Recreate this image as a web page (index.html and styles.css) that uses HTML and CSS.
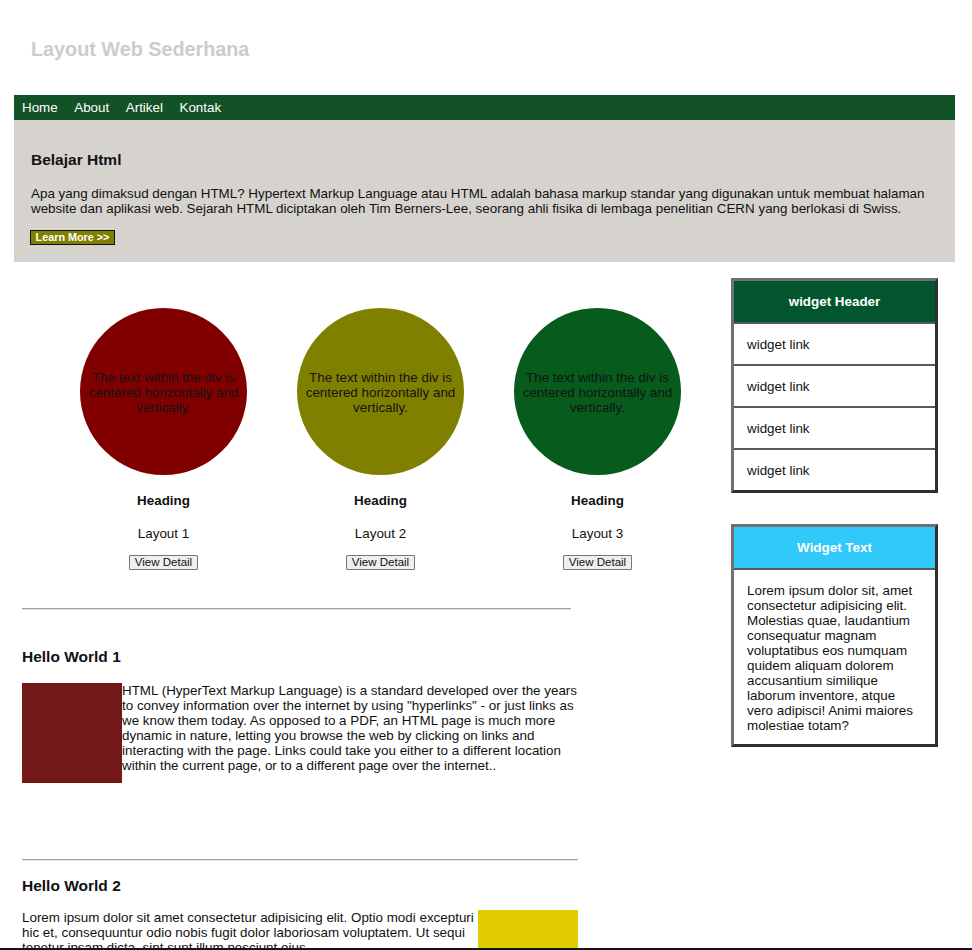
FILE: index.html
```html
<!DOCTYPE html>
<html lang="id">
<head>
<meta charset="utf-8">
<title>Layout Web Sederhana</title>
<link rel="stylesheet" href="styles.css">
</head>
<body>
<header class="site-header">
  <h1 class="site-title">Layout Web Sederhana</h1>
</header>
<nav class="nav">
  <a href="#">Home</a>
  <a href="#">About</a>
  <a href="#">Artikel</a>
  <a href="#">Kontak</a>
</nav>
<section class="jumbotron">
  <h2>Belajar Html</h2>
  <p>Apa yang dimaksud dengan HTML? Hypertext Markup Language atau HTML adalah bahasa markup standar yang digunakan untuk membuat halaman website dan aplikasi web. Sejarah HTML diciptakan oleh Tim Berners-Lee, seorang ahli fisika di lembaga penelitian CERN yang berlokasi di Swiss.</p>
  <button class="learn-btn">Learn More &gt;&gt;</button>
</section>
<div class="main">
  <main class="content">
    <div class="cards">
      <div class="card">
        <div class="circle c-maroon"><span>The text within the div is centered horizontally and vertically.</span></div>
        <h3>Heading</h3>
        <p>Layout 1</p>
        <button class="detail-btn">View Detail</button>
      </div>
      <div class="card">
        <div class="circle c-olive"><span>The text within the div is centered horizontally and vertically.</span></div>
        <h3>Heading</h3>
        <p>Layout 2</p>
        <button class="detail-btn">View Detail</button>
      </div>
      <div class="card">
        <div class="circle c-green"><span>The text within the div is centered horizontally and vertically.</span></div>
        <h3>Heading</h3>
        <p>Layout 3</p>
        <button class="detail-btn">View Detail</button>
      </div>
    </div>
    <article class="article a1">
      <hr class="rule r1">
      <h2>Hello World 1</h2>
      <div class="box box-red"></div>
      <p>HTML (HyperText Markup Language) is a standard developed over the years to convey information over the internet by using "hyperlinks" - or just links as we know them today. As opposed to a PDF, an HTML page is much more dynamic in nature, letting you browse the web by clicking on links and interacting with the page. Links could take you either to a different location within the current page, or to a different page over the internet..</p>
    </article>
    <article class="article a2">
      <hr class="rule r2">
      <h2>Hello World 2</h2>
      <div class="box box-yellow"></div>
      <p>Lorem ipsum dolor sit amet consectetur adipisicing elit. Optio modi excepturi hic et, consequuntur odio nobis fugit dolor laboriosam voluptatem. Ut sequi tenetur ipsam dicta, sint sunt illum nesciunt eius.</p>
    </article>
  </main>
  <aside class="sidebar">
    <div class="widget">
      <div class="widget-head head-green">widget Header</div>
      <a class="widget-link" href="#">widget link</a>
      <a class="widget-link" href="#">widget link</a>
      <a class="widget-link" href="#">widget link</a>
      <a class="widget-link" href="#">widget link</a>
    </div>
    <div class="widget widget-2">
      <div class="widget-head head-cyan">Widget Text</div>
      <div class="widget-body">Lorem ipsum dolor sit, amet consectetur adipisicing elit. Molestias quae, laudantium consequatur magnam voluptatibus eos numquam quidem aliquam dolorem accusantium similique laborum inventore, atque vero adipisci! Animi maiores molestiae totam?</div>
    </div>
  </aside>
</div>
<div class="bottom-bar"></div>
</body>
</html>
```
FILE: styles.css
```css
* { box-sizing: border-box; }
html, body { margin: 0; padding: 0; }
body {
  font-family: "Liberation Sans", Arial, sans-serif;
  font-size: 13.4px;
  color: #111;
  background: #fff;
  width: 972px;
}
.site-header {
  height: 95px;
  padding: 38px 0 0 31px;
}
.site-title {
  margin: 0;
  font-size: 19.8px;
  line-height: 23px;
  font-weight: bold;
  color: #cccccc;
}
.nav {
  margin: 0 17px 0 14px;
  height: 25px;
  background: #135227;
  display: flex;
  align-items: center;
}
.nav a {
  color: #fff;
  text-decoration: none;
  font-size: 13.4px;
  line-height: 25px;
  padding: 0 8.5px 0 8px;
}
.jumbotron {
  margin: 0 17px 0 14px;
  background: #d6d3cf;
  height: 142px;
  padding: 31px 17px 0 17px;
}
.jumbotron h2 {
  margin: 0;
  font-size: 15.5px;
  line-height: 18px;
  font-weight: bold;
  color: #111;
}
.jumbotron p {
  margin: 17px 0 0 0;
  font-size: 13.4px;
  line-height: 15px;
}
.learn-btn {
  margin: 14px 0 0 -1px;
  display: block;
  width: 85px;
  height: 15px;
  padding: 0;
  text-align: center;
  background: #808000;
  border: 1px solid #111;
  color: #fff;
  font-family: "Liberation Sans", Arial, sans-serif;
  font-size: 10.8px;
  font-weight: bold;
  line-height: 13px;
}
.main {
  display: flex;
  padding-left: 14px;
  margin-top: 16px;
  width: 938px;
}
.content {
  width: 717px;
}
.cards {
  display: grid;
  grid-template-columns: repeat(3, 217px);
  margin-left: 41px;
  padding-top: 30px;
}
.card {
  text-align: center;
}
.circle {
  width: 167px;
  height: 167px;
  border-radius: 50%;
  margin: 0 auto;
  display: flex;
  align-items: center;
  justify-content: center;
  padding: 2px 6px 0;
  font-size: 13.4px;
  line-height: 15px;
  color: #141414;
}
.c-maroon { background: #800000; }
.c-olive { background: #808000; }
.c-green { background: #065b1d; }
.card h3 {
  margin: 18px 0 0 0;
  font-size: 13.4px;
  line-height: 16px;
  font-weight: bold;
}
.card p {
  margin: 17px 0 0 0;
  line-height: 16px;
}
.detail-btn {
  margin-top: 13px;
  height: 15px;
  padding: 0 5px;
  background: #efefef;
  border: 1px solid #767676;
  border-radius: 1px;
  font-family: "Liberation Sans", Arial, sans-serif;
  font-size: 11.5px;
  line-height: 13px;
  color: #111;
}
.article {
  padding-left: 8px;
}
.article::after {
  content: "";
  display: block;
  clear: both;
}
.rule {
  margin: 0;
  height: 0;
  border: 0;
  border-top: 1px solid #9f9f9f;
  border-bottom: 1px solid #e6e6e6;
}
.r1 { width: 549px; margin-top: 38px; }
.r2 { width: 556px; margin-top: 76px; }
.article h2 {
  margin: 38px 0 0 0;
  font-size: 15.5px;
  line-height: 18px;
  font-weight: bold;
}
.a2 h2 { margin-top: 16px; }
.article p {
  margin: 0;
  font-size: 13.4px;
  line-height: 15px;
}
.box {
  width: 100px;
  height: 100px;
}
.box-red {
  float: left;
  margin-top: 17px;
  background: #731818;
}
.a1 p { padding-top: 17px; width: 556px; }
.box-yellow {
  float: right;
  margin-top: 15px;
  background: #e0cc00;
}
.a2 { width: 564px; }
.a2 p { padding-top: 15px; }
.sidebar {
  width: 207px;
  flex: none;
}
.widget {
  border: 3px solid;
  border-color: #707070 #2e2e2e #2e2e2e #707070;
  background: #fff;
  display: flex;
  flex-direction: column;
}
.widget-2 {
  margin-top: 31px;
}
.widget-head {
  height: 43px;
  border-bottom: 2px solid #5a5a5a;
  color: #fff;
  font-weight: bold;
  font-size: 13.4px;
  display: flex;
  align-items: center;
  justify-content: center;
}
.head-green { background: #02552c; }
.head-cyan { background: #30c9f9; }
.widget-link {
  height: 42px;
  border-bottom: 2px solid #5a5a5a;
  color: #111;
  text-decoration: none;
  padding-left: 13px;
  display: flex;
  align-items: center;
}
.widget-link:last-child {
  height: 40px;
  border-bottom: 0;
}
.widget-body {
  padding: 13px 16px 11px 13px;
  font-size: 13.4px;
  line-height: 15px;
}
.bottom-bar {
  position: fixed;
  left: 0;
  right: 0;
  bottom: 0;
  height: 2px;
  background: #141414;
}
```
